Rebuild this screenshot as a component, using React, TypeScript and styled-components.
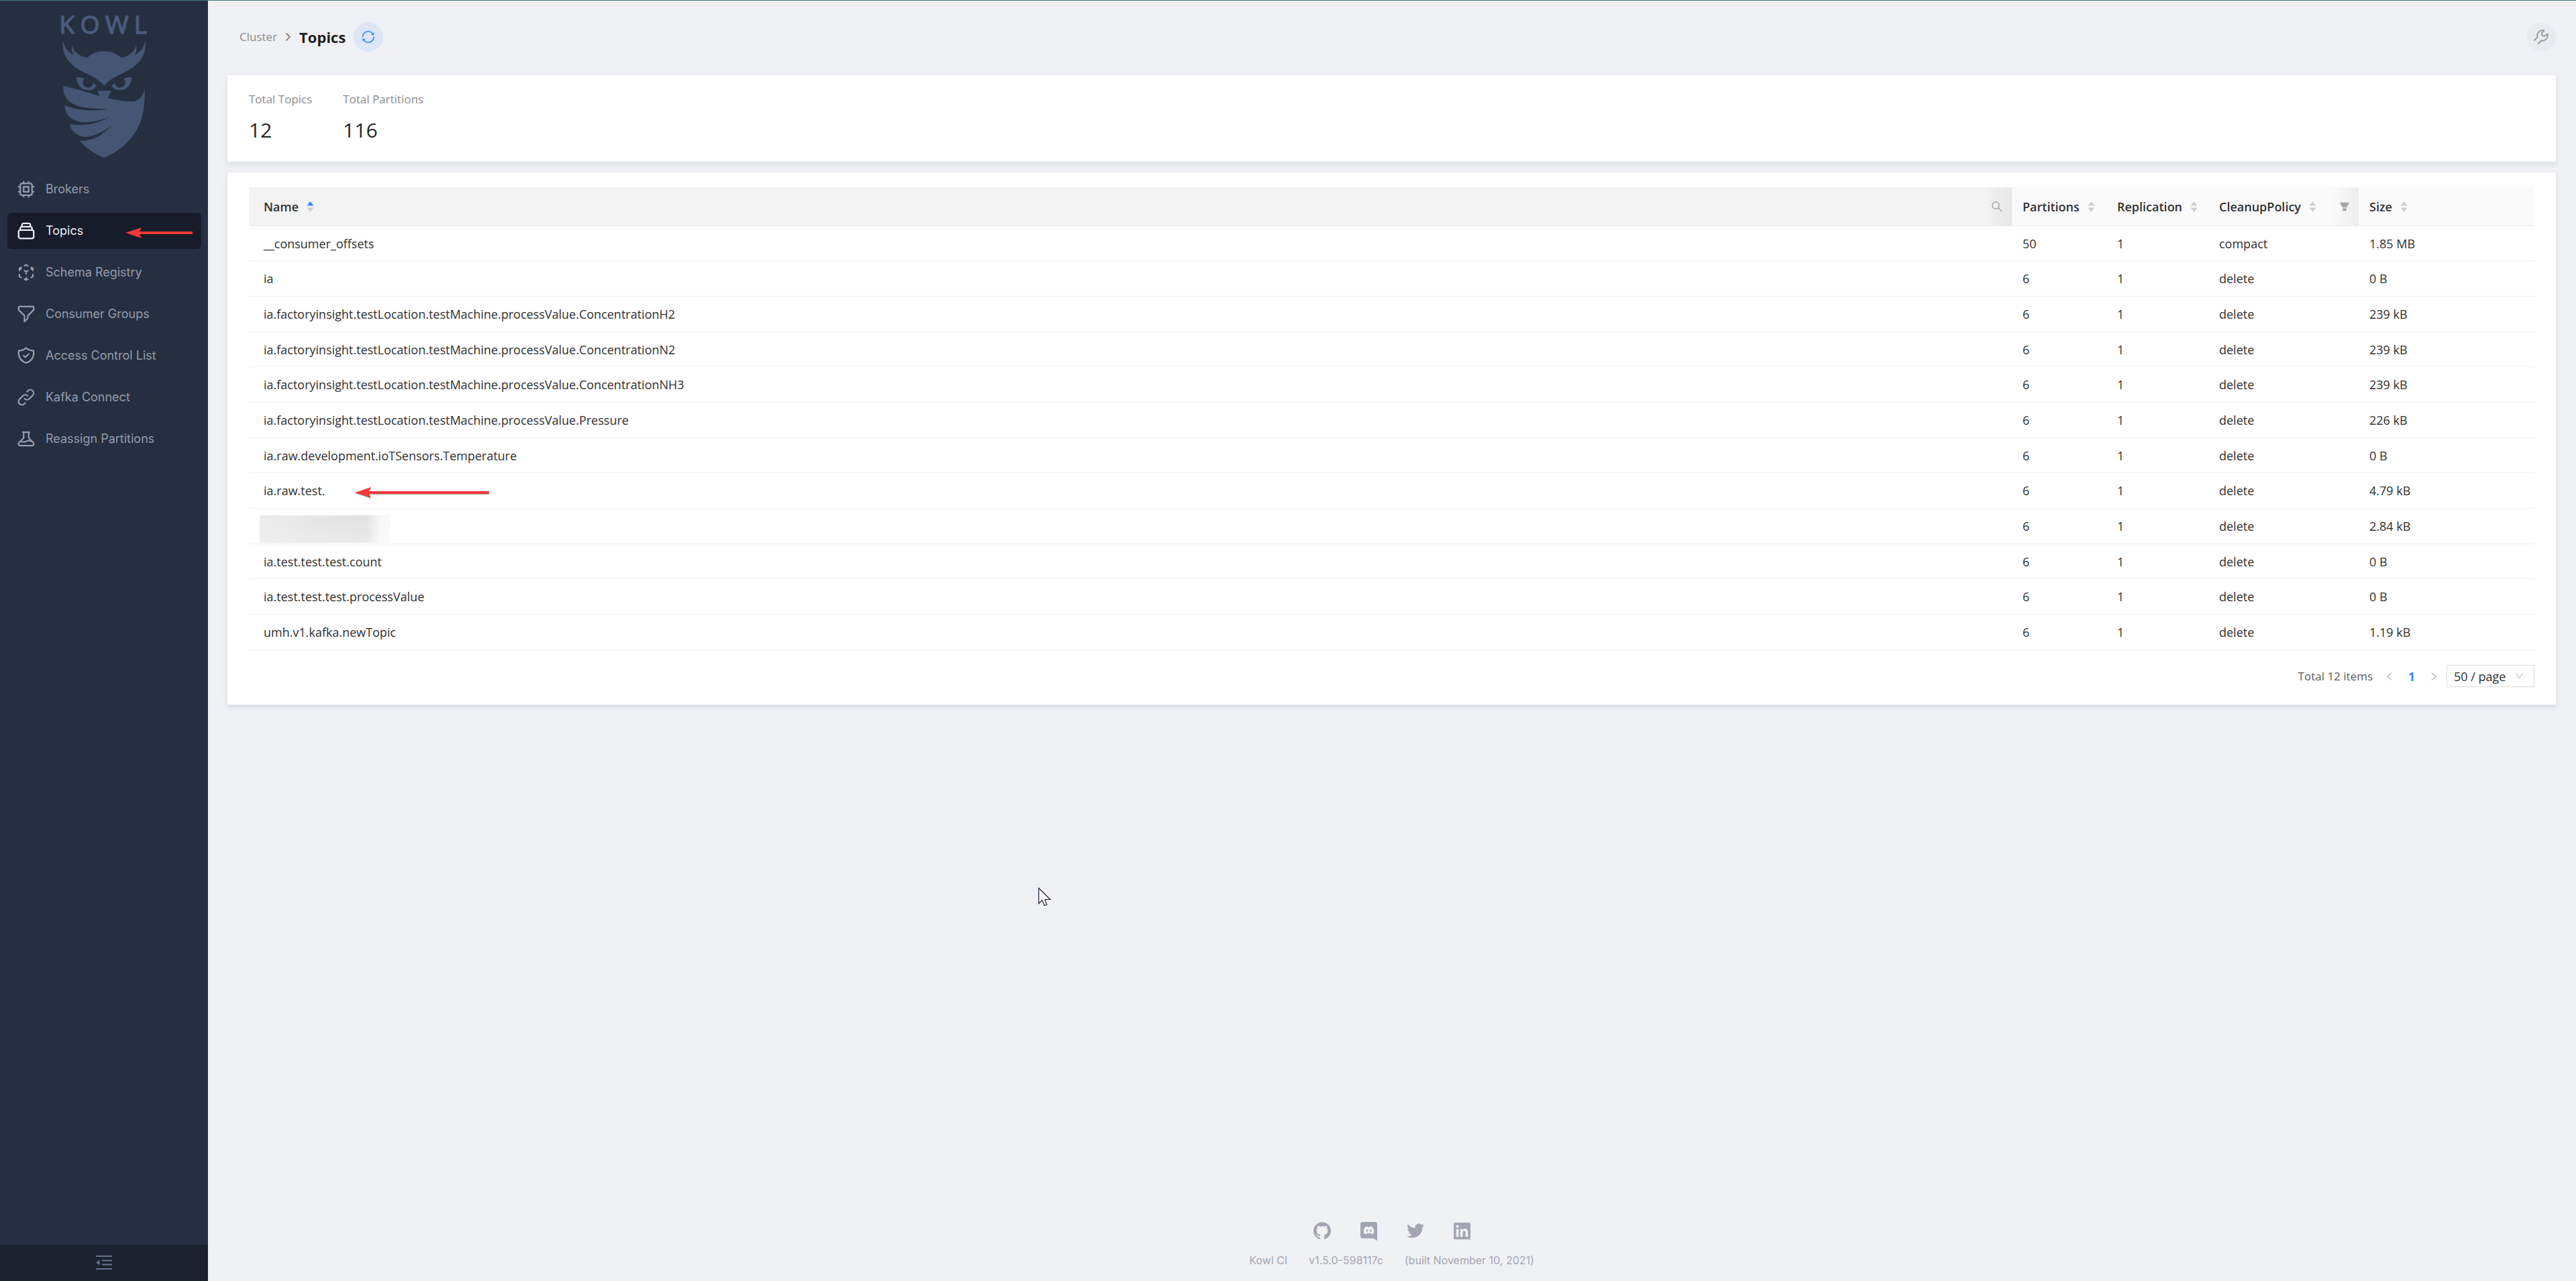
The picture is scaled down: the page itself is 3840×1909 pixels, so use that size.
import React from 'react';
import styled, { createGlobalStyle } from 'styled-components';
import {
  HiOutlineBeaker,
  HiOutlineChip,
  HiOutlineCollection,
  HiOutlineCubeTransparent,
  HiOutlineFilter,
  HiOutlineLink,
  HiOutlineShieldCheck,
} from 'react-icons/hi';
import {
  AiFillFilter,
  AiOutlineDown,
  AiOutlineLeft,
  AiOutlineRight,
  AiOutlineSearch,
  AiOutlineSync,
} from 'react-icons/ai';
import { FaDiscord, FaTwitter } from 'react-icons/fa';
import { SiGithub } from 'react-icons/si';

const bodyFont = '"Open Sans", "Noto Sans", sans-serif';
const navFont = 'Inter, "Open Sans", sans-serif';

const GlobalStyle = createGlobalStyle`
  *, *::before, *::after { box-sizing: border-box; }
  body {
    margin: 0;
    background: #f0f1f5;
    color: #303030;
    font-family: ${bodyFont};
    font-size: 18px;
    line-height: 24px;
  }
  button { padding: 0; border: 0; background: none; font: inherit; color: inherit; cursor: pointer; }
  a { color: inherit; text-decoration: none; }
  svg { display: block; flex: none; }
`;

const Shell = styled.div`
  position: relative;
  display: flex;
  min-height: 100vh;
  border-top: 1px solid #3d7d84;
`;

/* ---------- sidebar ---------- */

const Sidebar = styled.aside`
  position: sticky;
  top: 0;
  flex: none;
  display: flex;
  flex-direction: column;
  width: 310px;
  height: calc(100vh - 1px);
  background: #262f40;
  font-family: ${navFont};
`;

const LogoLink = styled.a`
  display: flex;
  justify-content: center;
  padding: 21px 0 19px 2px;
`;

const LogoArt = styled.svg`
  width: 134px;
  height: 214px;
  overflow: visible;
`;

const Nav = styled.nav`
  display: flex;
  flex-direction: column;
  gap: 8px;
  padding: 0 10px 0 11px;
`;

const NavItem = styled.a<{ $active?: boolean }>`
  position: relative;
  display: flex;
  align-items: center;
  gap: 14px;
  height: 54px;
  padding-left: 13px;
  border-radius: 6px;
  background: ${p => (p.$active ? '#171c2b' : 'transparent')};
  color: ${p => (p.$active ? '#eceef2' : '#949cad')};

  svg path { stroke-width: 1.8; }
`;

const NavIcon = styled.span`
  display: flex;
  font-size: 30px;
`;

const CollapseButton = styled.button`
  display: flex;
  align-items: center;
  justify-content: center;
  height: 54px;
  margin-top: auto;
  background: #1c2330;
  color: #67738f;
`;

/* ---------- main column ---------- */

const Main = styled.div`
  flex: 1;
  min-width: 0;
  display: flex;
  flex-direction: column;
  padding: 0 30px 0 29px;
`;

const PageHeader = styled.header`
  display: flex;
  align-items: flex-start;
  justify-content: space-between;
  padding: 32px 0 35px 18px;
`;

const Breadcrumb = styled.div`
  display: flex;
  align-items: center;
  height: 44px;
`;

const Crumb = styled.a`
  font-size: 17px;
  color: #8c8c8c;
`;

const CrumbArrow = styled.svg`
  width: 9px;
  height: 14px;
  margin: 0 12px;
`;

const Title = styled.h1`
  margin: 0;
  font-size: 22px;
  font-weight: 700;
  line-height: 24px;
  color: #1f1f1f;
`;

const RoundButton = styled.button<{ $tone: 'blue' | 'grey' }>`
  display: flex;
  align-items: center;
  justify-content: center;
  width: 44px;
  height: 44px;
  border-radius: 50%;
  font-size: 22px;
  background: ${p => (p.$tone === 'blue' ? '#dce6f7' : '#e8ecf0')};
  color: ${p => (p.$tone === 'blue' ? '#2f8cff' : '#9b9b9b')};
`;

const TitleGroup = styled.div`
  display: flex;
  align-items: center;
  gap: 12px;
`;

const Cards = styled.main`
  display: flex;
  flex-direction: column;
  gap: 16px;
`;

const Card = styled.section`
  border-radius: 2px;
  background: #fff;
  box-shadow: 0 4px 8px rgba(30, 40, 60, 0.1);
`;

const StatsCard = styled(Card)`
  display: flex;
  gap: 46px;
  padding: 24px 32px 27px;
`;

const TableCard = styled(Card)`
  padding: 22px 32px 26px;
`;

const StatLabel = styled.div`
  margin-bottom: 14px;
  font-size: 17px;
  color: #8c8c8c;
`;

const StatValue = styled.div`
  font-size: 30px;
  line-height: 40px;
  color: #262626;
`;

/* ---------- table ---------- */

const Table = styled.table`
  width: 100%;
  table-layout: fixed;
  border-collapse: separate;
  border-spacing: 0;
`;

const Col = styled.col<{ $w?: number }>`
  width: ${p => (p.$w ? `${p.$w}px` : 'auto')};
`;

const HeadCell = styled.th<{ $sorted?: boolean }>`
  height: 58px;
  padding: 0;
  border-bottom: 1px solid #ececec;
  background: ${p => (p.$sorted ? '#f3f3f3' : '#fafafa')};
  font-weight: 600;
  text-align: left;
`;

const HeadInner = styled.div`
  display: flex;
  align-items: center;
  justify-content: space-between;
  height: 57px;
  padding-left: 16px;

  ${HeadCell}:first-child & { padding-left: 22px; }
`;

const SortButton = styled.button`
  display: flex;
  align-items: center;
  gap: 12px;
`;

const FilterButton = styled.button`
  display: flex;
  align-items: center;
  justify-content: flex-end;
  width: 40px;
  height: 56px;
  padding-right: 12px;
  background: linear-gradient(to right, rgba(0, 0, 0, 0), rgba(0, 0, 0, 0.05));
  color: #a6a6a6;
`;

const Row = styled.tr`
  height: 53px;
  &:nth-child(3n + 1) { height: 52px; }
`;

const Cell = styled.td`
  padding: 0 0 0 16px;
  border-bottom: 1px solid #f0f0f0;
  &:first-child { padding-left: 22px; }
`;

const RedactedCell = styled(Cell)`
  &:first-child { padding: 8px 0 0 16px; }
`;

const Redaction = styled.div`
  width: 195px;
  height: 41px;
  background:
    linear-gradient(to right, rgba(255, 255, 255, 0) 82%, rgba(255, 255, 255, 0.7) 92%, rgba(255, 255, 255, 0.8)),
    linear-gradient(172deg, rgba(255, 255, 255, 0) 30%, rgba(255, 255, 255, 0.35)),
    linear-gradient(to right, #ededed, #e1e1e1 76%);
`;

const NameWrap = styled.a`
  position: relative;
  display: inline-block;
`;

/* ---------- pagination ---------- */

const Pagination = styled.div`
  display: flex;
  align-items: center;
  justify-content: flex-end;
  height: 33px;
  margin-top: 22px;
`;

const PageTotal = styled.span`
  margin-right: 16px;
  font-size: 17px;
  color: #595959;
`;

const PageButton = styled.button<{ $current?: boolean }>`
  display: flex;
  align-items: center;
  justify-content: center;
  width: ${p => (p.$current ? '48px' : '18px')};
  height: 32px;
  font-weight: ${p => (p.$current ? 700 : 400)};
  font-size: ${p => (p.$current ? '18px' : '16px')};
  color: ${p => (p.$current ? '#2f8cff' : '#b5b5b5')};
`;

const SizeSelect = styled.label`
  position: relative;
  display: flex;
  align-items: center;
  width: 131px;
  margin-left: 10px;

  svg {
    position: absolute;
    right: 15px;
    color: #bfbfbf;
    font-size: 15px;
    pointer-events: none;
  }
`;

const Select = styled.select`
  appearance: none;
  width: 100%;
  height: 33px;
  padding: 0 0 0 10px;
  border: 1px solid #d9d9d9;
  border-radius: 2px;
  background: #fff;
  color: #303030;
  font-family: inherit;
  font-size: 18px;
  line-height: 24px;
`;

/* ---------- footer ---------- */

const Footer = styled.footer`
  display: flex;
  flex-direction: column;
  align-items: center;
  gap: 18px;
  margin-top: auto;
  padding: 24px 0 19px;
  font-family: ${navFont};
  font-size: 16px;
  color: #a1a6b3;
`;

const SocialLinks = styled.div`
  display: flex;
  align-items: center;
  gap: 44px;
  height: 28px;
  font-size: 26px;
`;

const BuildInfo = styled.div`
  display: flex;
  gap: 32px;
`;

/* ---------- annotations ---------- */

const ArrowArt = styled.svg<{ $left: number; $top: number }>`
  position: absolute;
  left: ${p => p.$left}px;
  top: ${p => p.$top}px;
  filter: drop-shadow(0 1px 0 rgba(0, 0, 0, 0.35));
`;

const Pointer = styled.svg`
  position: absolute;
  left: 1547px;
  top: 1321px;
`;

function RedArrow({ length, left, top }: { length: number; left: number; top: number }) {
  return (
    <ArrowArt $left={left} $top={top} width={length} height={18} aria-hidden="true">
      <path d={`M0 9 L24 1 L21 7 H${length} V11 H21 L24 17 Z`} fill="#f23a3a" />
    </ArrowArt>
  );
}

function KowlLogo() {
  const eye =
    'M342 345 Q362 344 379 351 A23.5 23.5 0 1 0 418 371 Q428 375 433 383 C424 398 412 402 398 403 C370 404 345 385 342 345Z';
  return (
    <LogoArt viewBox="268 66 402 642" role="img" aria-label="Kowl">
      <text
        x="266"
        y="149"
        fontFamily="Open Sans, sans-serif"
        fontWeight="500"
        fontSize="112"
        letterSpacing="25"
        fill="#4b5b7c"
        stroke="#4b5b7c"
        strokeWidth="4"
        strokeLinejoin="round"
      >
        KOWL
      </text>
      <g fill="#445673">
        <path d="M283 178 C286 210 303 232 331 247 C322 232 319 218 324 204 C330 232 358 252 391 258 C432 219 502 219 543 258 C575 252 604 232 609 204 C614 218 612 232 603 247 C630 232 648 210 651 178 C658 245 630 290 545 330 C510 346 484 362 467 384 C450 362 424 346 389 330 C304 290 276 245 283 178Z" />
        <path d={eye} />
        <path d={eye} transform="translate(933 0) scale(-1 1)" />
        <path d="M285 383 C330 396 390 410 446 430 L436 406 H498 L483 438 C520 447 560 455 600 454 C625 448 643 425 648 396 C650 470 642 540 600 600 C565 650 520 682 467 705 C425 690 385 660 358 630 C415 630 455 610 502 559 C460 592 420 612 380 612 C345 610 318 585 312 555 C375 566 430 556 492 523 C450 538 420 546 380 546 C325 545 292 515 290 470 C345 495 410 497 486 489 C440 486 380 486 345 472 C300 455 280 425 285 383Z" />
      </g>
    </LogoArt>
  );
}

function Wrench() {
  return (
    <svg width="24" height="24" viewBox="0 0 24 24" fill="none" stroke="currentColor" strokeWidth="2" strokeLinecap="round" strokeLinejoin="round" aria-hidden="true">
      <path d="M2 17 L6.500 12.500 C5 6.500 9.500 1 16.500 2.500 L13 6 C12 9 14.500 11.500 17.500 10.500 L21.500 7.500 C23 13.500 18 18.500 12 17.500 L8 22" />
    </svg>
  );
}

function MenuFold() {
  return (
    <svg width="24" height="22" viewBox="0 0 24 22" fill="currentColor" aria-hidden="true">
      <path d="M0 0h24v2H0z M9 6.500h15v2H9z M9 12.500h15v2H9z M0 19h24v2H0z M5.500 6.500v8L0 10.500z" />
    </svg>
  );
}

function SortCarets({ up }: { up?: boolean }) {
  return (
    <svg width="11" height="18" viewBox="0 0 11 18" aria-hidden="true">
      <path d="M5.500 1 L10.500 7.500 H0.500Z" fill={up ? '#2f8cff' : '#d0d0d0'} />
      <path d="M5.500 17 L10.500 10.500 H0.500Z" fill="#d0d0d0" />
    </svg>
  );
}

function DiscordBubble() {
  return (
    <svg width="25" height="29" viewBox="0 0 25 29" aria-hidden="true">
      <path d="M3 1 H22 A3 3 0 0 1 25 4 V29 L19 25.500 H3 A3 3 0 0 1 0 22.500 V4 A3 3 0 0 1 3 1Z" fill="currentColor" />
      <FaDiscord x="4" y="5" size={17} color="#f0f1f5" />
    </svg>
  );
}

function LinkedIn() {
  return (
    <svg width="25" height="25" viewBox="0 0 24 24" fill="currentColor" aria-hidden="true">
      <path d="M20.447 20.452h-3.554v-5.569c0-1.328-.027-3.037-1.852-3.037-1.853 0-2.136 1.445-2.136 2.939v5.667H9.351V9h3.414v1.561h.046c.477-.9 1.637-1.85 3.370-1.850 3.601 0 4.267 2.370 4.267 5.455v6.286zM5.337 7.433c-1.144 0-2.063-.926-2.063-2.065 0-1.138.920-2.063 2.063-2.063 1.140 0 2.064.925 2.064 2.063 0 1.139-.925 2.065-2.064 2.065zm1.782 13.019H3.555V9h3.564v11.452zM22.225 0H1.771C.792 0 0 .774 0 1.729v20.542C0 23.227.792 24 1.771 24h20.451C23.200 24 24 23.227 24 22.271V1.729C24 .774 23.200 0 22.222 0h.003z" />
    </svg>
  );
}

const navItems = [
  { label: 'Brokers', Icon: HiOutlineChip },
  { label: 'Topics', Icon: HiOutlineCollection, active: true },
  { label: 'Schema Registry', Icon: HiOutlineCubeTransparent },
  { label: 'Consumer Groups', Icon: HiOutlineFilter },
  { label: 'Access Control List', Icon: HiOutlineShieldCheck },
  { label: 'Kafka Connect', Icon: HiOutlineLink },
  { label: 'Reassign Partitions', Icon: HiOutlineBeaker },
];

interface Topic {
  name: string | null;
  partitions: number;
  policy: string;
  size: string;
  marked?: boolean;
}

const machine = 'ia.factoryinsight.testLocation.testMachine.processValue.';

const topics: Topic[] = [
  { name: '__consumer_offsets', partitions: 50, policy: 'compact', size: '1.85 MB' },
  { name: 'ia', partitions: 6, policy: 'delete', size: '0 B' },
  { name: machine + 'ConcentrationH2', partitions: 6, policy: 'delete', size: '239 kB' },
  { name: machine + 'ConcentrationN2', partitions: 6, policy: 'delete', size: '239 kB' },
  { name: machine + 'ConcentrationNH3', partitions: 6, policy: 'delete', size: '239 kB' },
  { name: machine + 'Pressure', partitions: 6, policy: 'delete', size: '226 kB' },
  { name: 'ia.raw.development.ioTSensors.Temperature', partitions: 6, policy: 'delete', size: '0 B' },
  { name: 'ia.raw.test.', partitions: 6, policy: 'delete', size: '4.79 kB', marked: true },
  { name: null, partitions: 6, policy: 'delete', size: '2.84 kB' },
  { name: 'ia.test.test.test.count', partitions: 6, policy: 'delete', size: '0 B' },
  { name: 'ia.test.test.test.processValue', partitions: 6, policy: 'delete', size: '0 B' },
  { name: 'umh.v1.kafka.newTopic', partitions: 6, policy: 'delete', size: '1.19 kB' },
];

export default function App() {
  return (
    <>
      <GlobalStyle />
      <Shell>
        <Sidebar>
          <LogoLink href="#">
            <KowlLogo />
          </LogoLink>
          <Nav>
            {navItems.map(({ label, Icon, active }) => (
              <NavItem key={label} href="#" $active={active}>
                <NavIcon><Icon /></NavIcon>
                {label}
                {active && <RedArrow length={100} left={176} top={21} />}
              </NavItem>
            ))}
          </Nav>
          <CollapseButton aria-label="Collapse sidebar">
            <MenuFold />
          </CollapseButton>
        </Sidebar>

        <Main>
          <PageHeader>
            <TitleGroup>
              <Breadcrumb>
                <Crumb href="#">Cluster</Crumb>
                <CrumbArrow viewBox="0 0 9 14" fill="none" stroke="#8c8c8c" strokeWidth="2" aria-hidden="true">
                  <path d="M1.500 1.500 L7 7 L1.500 12.500" />
                </CrumbArrow>
                <Title>Topics</Title>
              </Breadcrumb>
              <RoundButton $tone="blue" aria-label="Refresh"><AiOutlineSync /></RoundButton>
            </TitleGroup>
            <RoundButton $tone="grey" aria-label="Settings"><Wrench /></RoundButton>
          </PageHeader>

          <Cards>
            <StatsCard>
              <div>
                <StatLabel>Total Topics</StatLabel>
                <StatValue>12</StatValue>
              </div>
              <div>
                <StatLabel>Total Partitions</StatLabel>
                <StatValue>116</StatValue>
              </div>
            </StatsCard>

            <TableCard>
              <Table>
                <colgroup>
                  <Col />
                  <Col $w={141} />
                  <Col $w={152} />
                  <Col $w={224} />
                  <Col $w={262} />
                </colgroup>
                <thead>
                  <tr>
                    <HeadCell $sorted aria-sort="ascending">
                      <HeadInner>
                        <SortButton>Name<SortCarets up /></SortButton>
                        <FilterButton aria-label="Search name"><AiOutlineSearch size={20} /></FilterButton>
                      </HeadInner>
                    </HeadCell>
                    <HeadCell>
                      <HeadInner><SortButton>Partitions<SortCarets /></SortButton></HeadInner>
                    </HeadCell>
                    <HeadCell>
                      <HeadInner><SortButton>Replication<SortCarets /></SortButton></HeadInner>
                    </HeadCell>
                    <HeadCell>
                      <HeadInner>
                        <SortButton>CleanupPolicy<SortCarets /></SortButton>
                        <FilterButton aria-label="Filter policy"><AiFillFilter size={18} /></FilterButton>
                      </HeadInner>
                    </HeadCell>
                    <HeadCell>
                      <HeadInner><SortButton>Size<SortCarets /></SortButton></HeadInner>
                    </HeadCell>
                  </tr>
                </thead>
                <tbody>
                  {topics.map((t, i) => (
                    <Row key={i}>
                      {t.name === null ? (
                        <RedactedCell><Redaction /></RedactedCell>
                      ) : (
                        <Cell>
                          <NameWrap href="#">
                            {t.name}
                            {t.marked && <RedArrow length={200} left={136} top={6} />}
                          </NameWrap>
                        </Cell>
                      )}
                      <Cell>{t.partitions}</Cell>
                      <Cell>1</Cell>
                      <Cell>{t.policy}</Cell>
                      <Cell>{t.size}</Cell>
                    </Row>
                  ))}
                </tbody>
              </Table>

              <Pagination>
                <PageTotal>Total 12 items</PageTotal>
                <PageButton aria-label="Previous page"><AiOutlineLeft /></PageButton>
                <PageButton $current>1</PageButton>
                <PageButton aria-label="Next page"><AiOutlineRight /></PageButton>
                <SizeSelect>
                  <Select aria-label="Rows per page" defaultValue="50">
                    <option value="50">50 / page</option>
                    <option value="100">100 / page</option>
                  </Select>
                  <AiOutlineDown />
                </SizeSelect>
              </Pagination>
            </TableCard>
          </Cards>

          <Footer>
            <SocialLinks>
              <a href="#" aria-label="GitHub"><SiGithub /></a>
              <a href="#" aria-label="Discord"><DiscordBubble /></a>
              <a href="#" aria-label="Twitter"><FaTwitter /></a>
              <a href="#" aria-label="LinkedIn"><LinkedIn /></a>
            </SocialLinks>
            <BuildInfo>
              <span>Kowl CI</span>
              <span>v1.5.0-598117c</span>
              <span>(built November 10, 2021)</span>
            </BuildInfo>
          </Footer>
        </Main>

        <Pointer width="20" height="30" viewBox="0 0 20 30" aria-hidden="true">
          <path d="M1.500 1.500 V24.500 L6.500 19.500 L10 27.500 L13.500 26 L10.500 18.500 H18.500 Z" fill="#fff" stroke="#1b1b30" strokeWidth="1.200" />
        </Pointer>
      </Shell>
    </>
  );
}
